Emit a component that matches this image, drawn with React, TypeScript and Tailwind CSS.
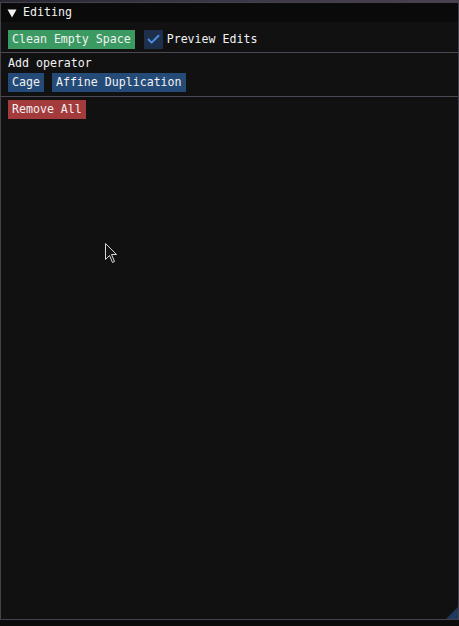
import { Check } from 'lucide-react';

const mono = { fontFamily: '"DejaVu Sans Mono", "Liberation Mono", monospace' };

function Button({ label, className }: { label: string; className: string }) {
  return (
    <button className={`h-[19px] px-[4px] text-[11.6px] leading-[19px] text-[#f2f2f2] ${className}`}>{label}</button>
  );
}

function Separator() {
  return <div className="mx-[-7px] h-px bg-[#4b4853]" />;
}

export default function App() {
  return (
    <div className="relative h-[626px] w-[459px] overflow-hidden bg-[#0b0b0c]" style={mono}>
      <div className="h-[2px] bg-gradient-to-r from-[#2a2630] via-[#3c3748] to-[#4a4150]" />
      <div className="flex h-[618px] w-[459px] flex-col border border-[#44424c] bg-[#111112]">
        <div className="flex h-[19px] shrink-0 items-center gap-[6px] bg-[#0a0a0a] pl-[6px]">
          <svg width="10" height="9" viewBox="0 0 10 9" className="mt-[1px]">
            <path d="M0.5 0.5 L9.5 0.5 L5 8.5 Z" fill="#f2f2f2" />
          </svg>
          <span className="text-[11.6px] text-[#f2f2f2]">Editing</span>
        </div>
        <div className="relative flex flex-1 flex-col px-[7px] pt-[8px]">
          <div className="flex items-center">
            <Button label="Clean Empty Space" className="bg-[#3b9a62]" />
            <div className="ml-[9px] flex h-[19px] w-[19px] items-center justify-center bg-[#1e2f4b]">
              <Check size={15} strokeWidth={3} color="#4a8fe6" />
            </div>
            <span className="ml-[4px] text-[11.6px] text-[#f2f2f2]">Preview Edits</span>
          </div>
          <div className="mt-[3px]">
            <Separator />
          </div>
          <div className="mt-[4px] h-[13px] text-[11.6px] leading-[13px] text-[#f2f2f2]">Add operator</div>
          <div className="mt-[3px] flex items-center gap-[8px]">
            <Button label="Cage" className="bg-[#244a78]" />
            <Button label="Affine Duplication" className="bg-[#244a78]" />
          </div>
          <div className="mt-[4px]">
            <Separator />
          </div>
          <div className="mt-[3px] flex">
            <Button label="Remove All" className="bg-[#a33b3c]" />
          </div>
          <div className="absolute bottom-0 right-0">
            <svg width="12" height="12" viewBox="0 0 12 12">
              <path d="M12 0 L12 12 L0 12 Z" fill="#1f3a5e" />
            </svg>
          </div>
        </div>
      </div>
      <div className="pointer-events-none absolute left-[105px] top-[243px]">
        <svg width="13" height="21" viewBox="0 0 13 21">
          <path
            d="M0.5 0.5 L0.5 16.5 L4.5 12.5 L7.5 19.5 L9.5 18.5 L6.5 11.5 L11.5 11.5 Z"
            fill="#141414"
            stroke="#d8d8d8"
            strokeWidth="1"
          />
        </svg>
      </div>
    </div>
  );
}
